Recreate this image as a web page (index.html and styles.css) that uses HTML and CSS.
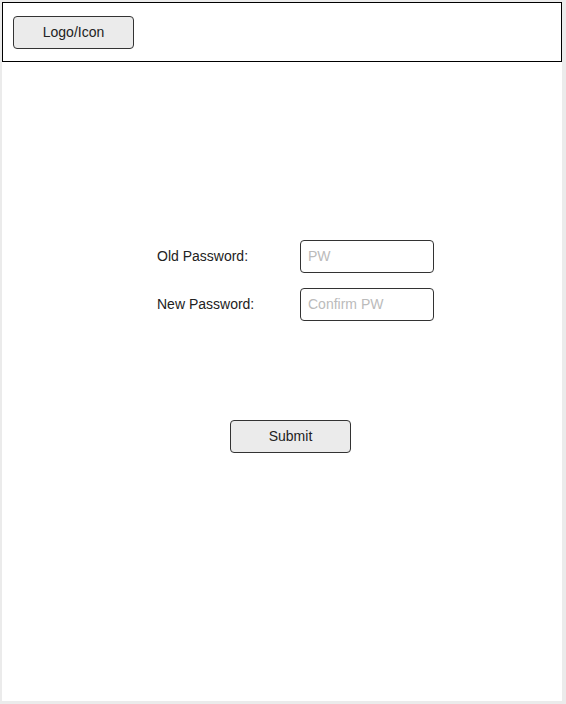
FILE: index.html
```html
<!DOCTYPE html>
<html lang="en">
<head>
    <meta charset="UTF-8">
    <meta name="viewport" content="width=device-width, initial-scale=1.0">
    <title>Change Password</title>
    <link rel="stylesheet" href="styles.css">
</head>
<body>
    <div class="page">
        <header class="top-bar">
            <button class="logo-btn" type="button">Logo/Icon</button>
        </header>
        <form class="pw-form">
            <div class="form-row">
                <label for="oldPw">Old Password:</label>
                <input type="password" id="oldPw" placeholder="PW">
            </div>
            <div class="form-row">
                <label for="newPw">New Password:</label>
                <input type="password" id="newPw" placeholder="Confirm PW">
            </div>
            <button type="submit" class="submit-btn">Submit</button>
        </form>
    </div>
</body>
</html>
```

FILE: styles.css
```css
* {
    margin: 0;
    padding: 0;
    box-sizing: border-box;
}

body {
    font-family: "Liberation Sans", Arial, sans-serif;
    background-color: #ebebeb;
    height: 704px;
    overflow: hidden;
}

.page {
    margin: 2px 0 0 2px;
    width: 560px;
    height: 699px;
    background-color: #fff;
}

.top-bar {
    height: 60px;
    border: 1px solid #000;
    padding: 13px 0 0 10px;
}

.logo-btn,
.submit-btn {
    width: 121px;
    height: 33px;
    padding-bottom: 2px;
    background-color: #ebebeb;
    border: 1px solid #333;
    border-radius: 4px;
    font-family: inherit;
    font-size: 14px;
    color: #222;
}

.pw-form {
    padding: 178px 0 0 155px;
}

.form-row {
    display: flex;
    align-items: center;
    margin-bottom: 15px;
}

.form-row label {
    width: 143px;
    padding-bottom: 2px;
    font-size: 14px;
    color: #222;
}

.form-row input {
    width: 134px;
    height: 33px;
    border: 1px solid #333;
    border-radius: 4px;
    padding: 0 7px 2px;
    font-family: inherit;
    font-size: 14px;
    color: #222;
}

.form-row input::placeholder {
    color: #bbb;
}

.submit-btn {
    display: block;
    margin: 99px 0 0 73px;
}
```
